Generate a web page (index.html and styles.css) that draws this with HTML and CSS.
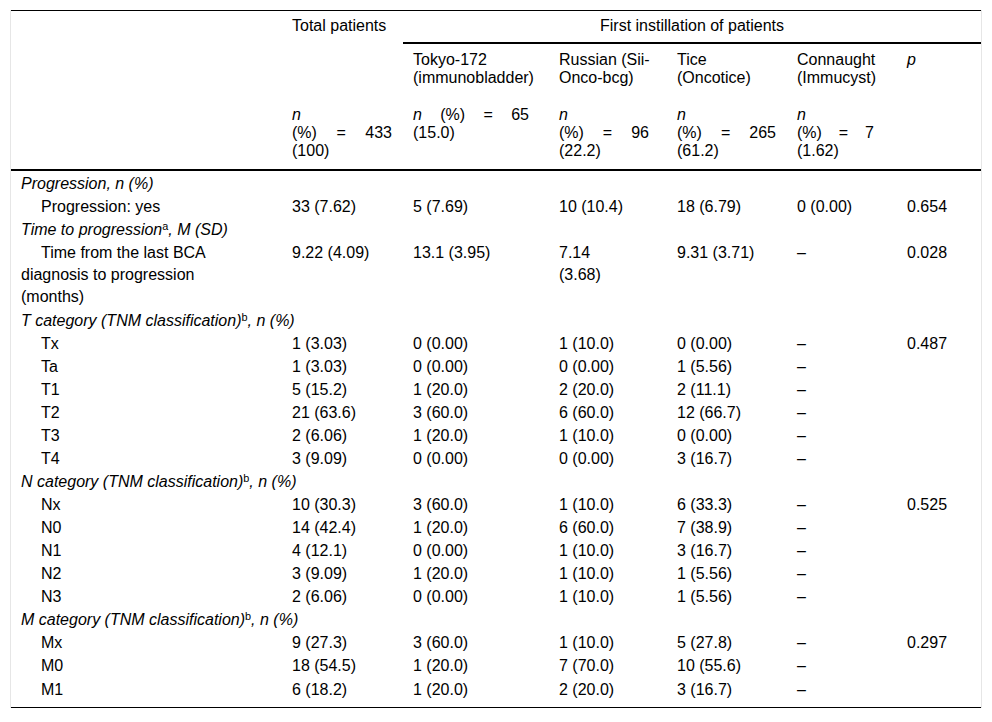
FILE: index.html
```html
<!DOCTYPE html>
<html>
<head>
<meta charset="utf-8">
<link rel="stylesheet" href="styles.css">
</head>
<body>
<div class="frame">
<table class="data">
<colgroup>
<col class="c-label"><col class="c-total"><col class="c-tokyo"><col class="c-russian"><col class="c-tice"><col class="c-conn"><col class="c-p">
</colgroup>
<thead>
<tr class="h1">
<th></th>
<th>Total patients</th>
<th colspan="5" class="group">First instillation of patients</th>
</tr>
<tr class="h2">
<th></th>
<th></th>
<th>Tokyo-172<br>(immunobladder)</th>
<th>Russian (Sii-<br>Onco-bcg)</th>
<th>Tice<br>(Oncotice)</th>
<th>Connaught<br>(Immucyst)</th>
<th><i>p</i></th>
</tr>
<tr class="h3">
<th></th>
<th><div class="just w-total"><i>n</i><br>(%) = 433<br>(100)</div></th>
<th><div class="just w-tokyo"><i>n</i> (%) = 65<br>(15.0)</div></th>
<th><div class="just w-russian"><i>n</i><br>(%) = 96<br>(22.2)</div></th>
<th><div class="just w-tice"><i>n</i><br>(%) = 265<br>(61.2)</div></th>
<th><div class="just w-conn"><i>n</i><br>(%) = 7<br>(1.62)</div></th>
<th></th>
</tr>
</thead>
<tbody>
<tr class="cat first"><td colspan="7">Progression, n (%)</td></tr>
<tr><td class="item">Progression: yes</td><td>33 (7.62)</td><td>5 (7.69)</td><td>10 (10.4)</td><td>18 (6.79)</td><td>0 (0.00)</td><td>0.654</td></tr>
<tr class="cat"><td colspan="7">Time to progression<sup>a</sup>, M (SD)</td></tr>
<tr class="tall"><td class="item">Time from the last BCA<br>diagnosis to progression<br>(months)</td><td>9.22 (4.09)</td><td>13.1 (3.95)</td><td>7.14<br>(3.68)</td><td>9.31 (3.71)</td><td>–</td><td>0.028</td></tr>
<tr class="cat"><td colspan="7">T category (TNM classification)<sup>b</sup>, n (%)</td></tr>
<tr><td class="item">Tx</td><td>1 (3.03)</td><td>0 (0.00)</td><td>1 (10.0)</td><td>0 (0.00)</td><td>–</td><td>0.487</td></tr>
<tr><td class="item">Ta</td><td>1 (3.03)</td><td>0 (0.00)</td><td>0 (0.00)</td><td>1 (5.56)</td><td>–</td><td></td></tr>
<tr><td class="item">T1</td><td>5 (15.2)</td><td>1 (20.0)</td><td>2 (20.0)</td><td>2 (11.1)</td><td>–</td><td></td></tr>
<tr><td class="item">T2</td><td>21 (63.6)</td><td>3 (60.0)</td><td>6 (60.0)</td><td>12 (66.7)</td><td>–</td><td></td></tr>
<tr><td class="item">T3</td><td>2 (6.06)</td><td>1 (20.0)</td><td>1 (10.0)</td><td>0 (0.00)</td><td>–</td><td></td></tr>
<tr><td class="item">T4</td><td>3 (9.09)</td><td>0 (0.00)</td><td>0 (0.00)</td><td>3 (16.7)</td><td>–</td><td></td></tr>
<tr class="cat"><td colspan="7">N category (TNM classification)<sup>b</sup>, n (%)</td></tr>
<tr><td class="item">Nx</td><td>10 (30.3)</td><td>3 (60.0)</td><td>1 (10.0)</td><td>6 (33.3)</td><td>–</td><td>0.525</td></tr>
<tr><td class="item">N0</td><td>14 (42.4)</td><td>1 (20.0)</td><td>6 (60.0)</td><td>7 (38.9)</td><td>–</td><td></td></tr>
<tr><td class="item">N1</td><td>4 (12.1)</td><td>0 (0.00)</td><td>1 (10.0)</td><td>3 (16.7)</td><td>–</td><td></td></tr>
<tr><td class="item">N2</td><td>3 (9.09)</td><td>1 (20.0)</td><td>1 (10.0)</td><td>1 (5.56)</td><td>–</td><td></td></tr>
<tr><td class="item">N3</td><td>2 (6.06)</td><td>0 (0.00)</td><td>1 (10.0)</td><td>1 (5.56)</td><td>–</td><td></td></tr>
<tr class="cat"><td colspan="7">M category (TNM classification)<sup>b</sup>, n (%)</td></tr>
<tr><td class="item">Mx</td><td>9 (27.3)</td><td>3 (60.0)</td><td>1 (10.0)</td><td>5 (27.8)</td><td>–</td><td>0.297</td></tr>
<tr><td class="item">M0</td><td>18 (54.5)</td><td>1 (20.0)</td><td>7 (70.0)</td><td>10 (55.6)</td><td>–</td><td></td></tr>
<tr class="last"><td class="item">M1</td><td>6 (18.2)</td><td>1 (20.0)</td><td>2 (20.0)</td><td>3 (16.7)</td><td>–</td><td></td></tr>
</tbody>
</table>
</div>
</body>
</html>
```

FILE: styles.css
```css
html, body {
  margin: 0;
  padding: 0;
  background: #ffffff;
}

body {
  font-family: "Liberation Sans", Arial, sans-serif;
  font-size: 16px;
  color: #000000;
  min-height: 722px;
}

.frame {
  margin: 10px 0 0 10px;
  width: 970px;
  border-left: 1px solid #e6e6e6;
  border-right: 1px solid #e6e6e6;
}

.data {
  margin-top: 1px;
  width: 970px;
  table-layout: fixed;
  border-collapse: separate;
  border-spacing: 0;
  border-top: 1px solid #000000;
  border-bottom: 1px solid #000000;
}

.c-label { width: 271px; }
.c-total { width: 121px; }
.c-tokyo { width: 146px; }
.c-russian { width: 118px; }
.c-tice { width: 120px; }
.c-conn { width: 110px; }
.c-p { width: 84px; }

.data th {
  font-weight: normal;
  text-align: left;
  vertical-align: top;
  padding: 0 10px;
}

.h1 th {
  line-height: 18px;
  padding-top: 6px;
  padding-bottom: 9px;
}

.h1 .group {
  text-align: center;
  border-bottom: 2px solid #000000;
  padding-bottom: 7px;
}

.h2 th {
  line-height: 18px;
  padding-top: 7px;
  padding-bottom: 3px;
}

.h3 th {
  line-height: 18px;
  padding-top: 16px;
  padding-bottom: 9px;
  border-bottom: 2px solid #000000;
}

.just {
  text-align: justify;
  text-align-last: justify;
}

.w-total { width: 100px; }
.w-tokyo { width: 116px; }
.w-russian { width: 90px; }
.w-tice { width: 99px; }
.w-conn { width: 77px; }

.data td {
  vertical-align: top;
  text-align: left;
  line-height: 22px;
  padding: 0.5px 10px 0.5px 10px;
}

.cat td {
  font-style: italic;
}

.cat.first td {
  padding-top: 1.5px;
}

.tall td {
  padding-top: 1px;
  padding-bottom: 1.5px;
}

.data sup {
  font-style: normal;
  font-size: 0.68em;
  line-height: 0;
  vertical-align: 0.45em;
}

.data td.item {
  text-indent: 20px;
}

.last td {
  padding-top: 1.5px;
  padding-bottom: 6px;
}
```
